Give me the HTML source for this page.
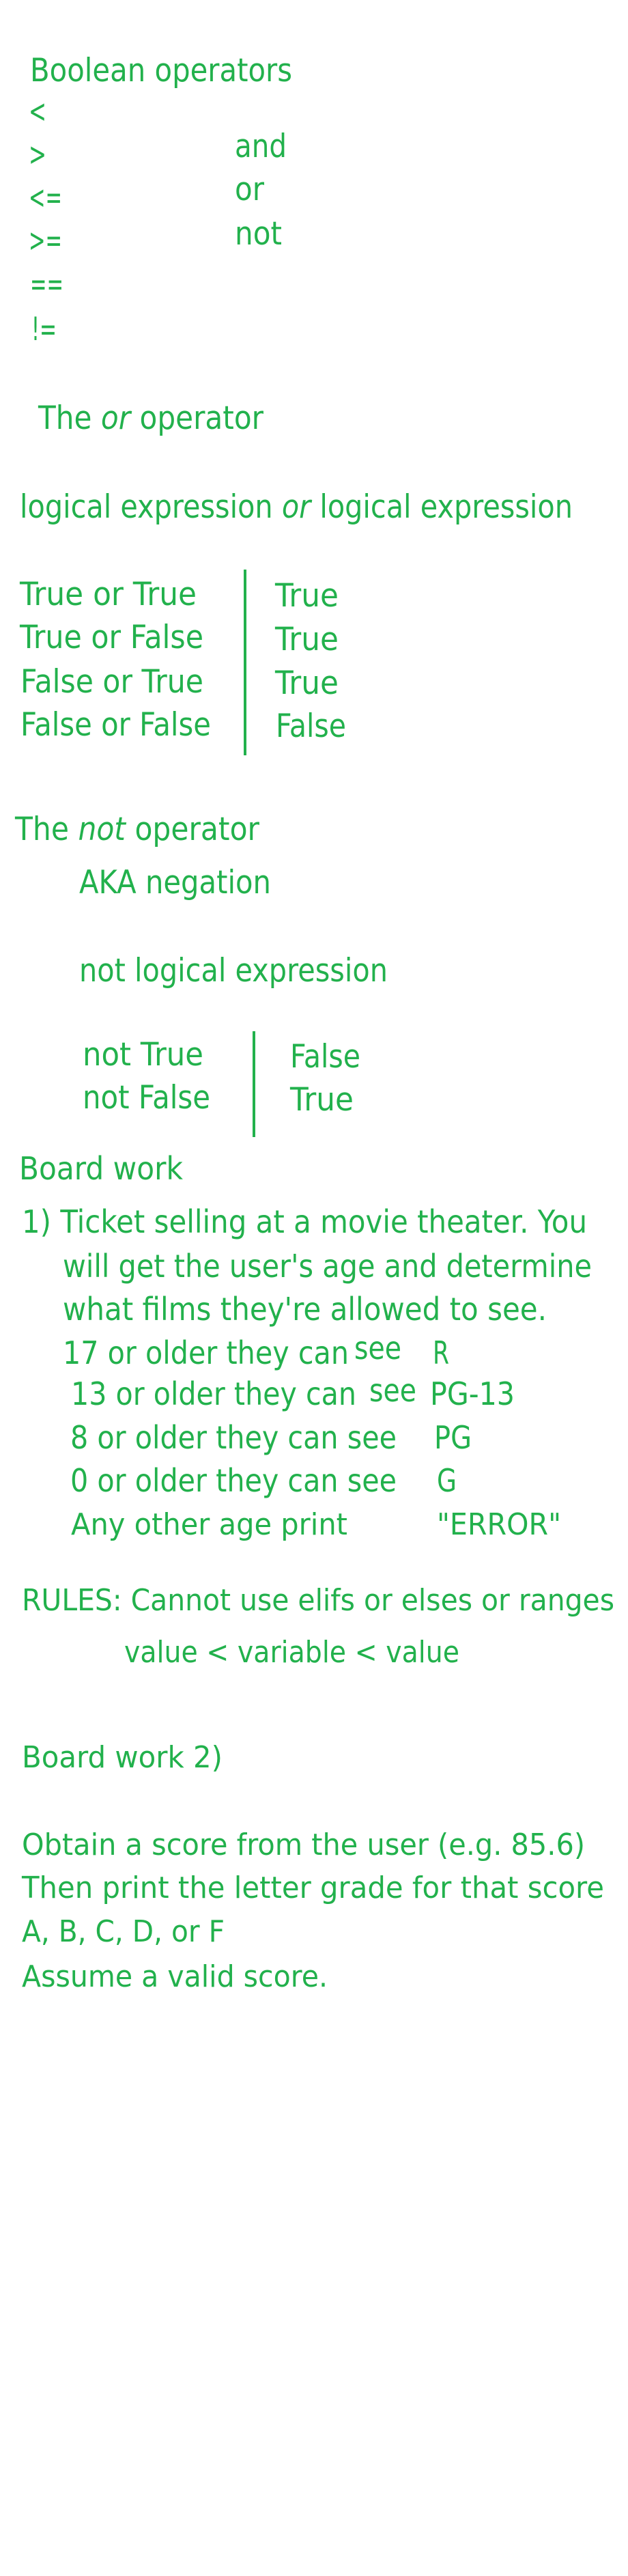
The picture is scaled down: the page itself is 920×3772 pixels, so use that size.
<!DOCTYPE html>
<html><head><meta charset="utf-8"><style>
html,body{margin:0;padding:0;background:#fff;width:920px;height:3772px;overflow:hidden}
svg{display:block}
text{font-family:"DejaVu Sans","Liberation Sans",sans-serif;fill:#22b14c}
.a{font-size:47px}.b{font-size:46px}.c{font-size:44px}
</style></head><body>
<svg width="920" height="3772" viewBox="0 0 920 3772" xmlns="http://www.w3.org/2000/svg">
<g>
<text class="a" x="44" y="119" textLength="384" lengthAdjust="spacingAndGlyphs">Boolean operators</text>
<text class="a" x="42" y="179" textLength="26" lengthAdjust="spacingAndGlyphs">&lt;</text>
<text class="a" x="42" y="242" textLength="26" lengthAdjust="spacingAndGlyphs">&gt;</text>
<text class="a" x="42" y="305" textLength="49" lengthAdjust="spacingAndGlyphs">&lt;=</text>
<text class="a" x="42" y="368" textLength="49" lengthAdjust="spacingAndGlyphs">&gt;=</text>
<text class="a" x="44" y="432" textLength="49" lengthAdjust="spacingAndGlyphs">==</text>
<text class="a" x="46" y="498" textLength="37" lengthAdjust="spacingAndGlyphs">!=</text>
<text class="a" x="344" y="230" textLength="76" lengthAdjust="spacingAndGlyphs">and</text>
<text class="a" x="344" y="293" textLength="43" lengthAdjust="spacingAndGlyphs">or</text>
<text class="a" x="344" y="358" textLength="69" lengthAdjust="spacingAndGlyphs">not</text>
<text class="a" x="56" y="628" textLength="330" lengthAdjust="spacingAndGlyphs">The <tspan font-style="italic">or</tspan> operator</text>
<text class="a" x="29" y="758" textLength="810" lengthAdjust="spacingAndGlyphs">logical expression <tspan font-style="italic">or</tspan> logical expression</text>
<text class="a" x="29" y="886" textLength="259" lengthAdjust="spacingAndGlyphs">True or True</text>
<text class="a" x="29" y="949" textLength="269" lengthAdjust="spacingAndGlyphs">True or False</text>
<text class="a" x="30" y="1014" textLength="268" lengthAdjust="spacingAndGlyphs">False or True</text>
<text class="a" x="30" y="1077" textLength="279" lengthAdjust="spacingAndGlyphs">False or False</text>
<rect x="357" y="834" width="4" height="272" fill="#22b14c"/>
<text class="a" x="403" y="888" textLength="93" lengthAdjust="spacingAndGlyphs">True</text>
<text class="a" x="403" y="952" textLength="93" lengthAdjust="spacingAndGlyphs">True</text>
<text class="a" x="403" y="1016" textLength="93" lengthAdjust="spacingAndGlyphs">True</text>
<text class="a" x="404" y="1079" textLength="103" lengthAdjust="spacingAndGlyphs">False</text>

<text class="a" x="22" y="1230" textLength="358" lengthAdjust="spacingAndGlyphs">The <tspan font-style="italic">not</tspan> operator</text>
<text class="a" x="116" y="1308" textLength="281" lengthAdjust="spacingAndGlyphs">AKA negation</text>
<text class="a" x="116" y="1437" textLength="452" lengthAdjust="spacingAndGlyphs">not logical expression</text>
<text class="a" x="121" y="1560" textLength="177" lengthAdjust="spacingAndGlyphs">not True</text>
<text class="a" x="121" y="1623" textLength="187" lengthAdjust="spacingAndGlyphs">not False</text>
<rect x="370" y="1510" width="4" height="155" fill="#22b14c"/>
<text class="a" x="425" y="1563" textLength="103" lengthAdjust="spacingAndGlyphs">False</text>
<text class="a" x="425" y="1626" textLength="93" lengthAdjust="spacingAndGlyphs">True</text>

<text class="b" x="28" y="1727" textLength="240" lengthAdjust="spacingAndGlyphs">Board work</text>
<text class="b" x="32" y="1805" textLength="828" lengthAdjust="spacingAndGlyphs">1) Ticket selling at a movie theater. You</text>
<text class="b" x="92" y="1870" textLength="775" lengthAdjust="spacingAndGlyphs">will get the user's age and determine</text>
<text class="b" x="92" y="1933" textLength="709" lengthAdjust="spacingAndGlyphs">what films they're allowed to see.</text>
<text class="b" x="92" y="1997" textLength="419" lengthAdjust="spacingAndGlyphs">17 or older they can</text>
<text class="b" x="519" y="1990" textLength="69" lengthAdjust="spacingAndGlyphs">see</text>
<text class="b" x="634" y="1997" textLength="24" lengthAdjust="spacingAndGlyphs">R</text>
<text class="b" x="104" y="2057" textLength="418" lengthAdjust="spacingAndGlyphs">13 or older they can</text>
<text class="b" x="541" y="2052" textLength="69" lengthAdjust="spacingAndGlyphs">see</text>
<text class="b" x="630" y="2057" textLength="124" lengthAdjust="spacingAndGlyphs">PG-13</text>
<text class="b" x="103" y="2121" textLength="478" lengthAdjust="spacingAndGlyphs">8 or older they can see</text>
<text class="b" x="636" y="2121" textLength="55" lengthAdjust="spacingAndGlyphs">PG</text>
<text class="b" x="103" y="2184" textLength="478" lengthAdjust="spacingAndGlyphs">0 or older they can see</text>
<text class="b" x="640" y="2184" textLength="29" lengthAdjust="spacingAndGlyphs">G</text>

<text class="c" x="104" y="2247" textLength="405" lengthAdjust="spacingAndGlyphs">Any other age print</text>
<text class="c" x="640" y="2247" textLength="182" lengthAdjust="spacingAndGlyphs">"ERROR"</text>
<text class="c" x="32" y="2358" textLength="868" lengthAdjust="spacingAndGlyphs">RULES: Cannot use elifs or elses or ranges</text>
<text class="c" x="182" y="2434" textLength="491" lengthAdjust="spacingAndGlyphs">value &lt; variable &lt; value</text>
<text class="c" x="32" y="2588" textLength="294" lengthAdjust="spacingAndGlyphs">Board work 2)</text>
<text class="c" x="32" y="2716" textLength="825" lengthAdjust="spacingAndGlyphs">Obtain a score from the user (e.g. 85.6)</text>
<text class="c" x="32" y="2779" textLength="853" lengthAdjust="spacingAndGlyphs">Then print the letter grade for that score</text>
<text class="c" x="32" y="2843" textLength="297" lengthAdjust="spacingAndGlyphs">A, B, C, D, or F</text>
<text class="c" x="32" y="2909" textLength="448" lengthAdjust="spacingAndGlyphs">Assume a valid score.</text>
</g>
</svg>
</body></html>
